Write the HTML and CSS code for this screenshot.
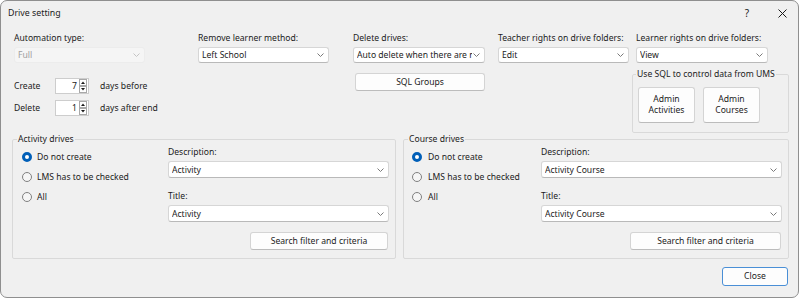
FILE: index.html
```html
<!DOCTYPE html>
<html lang="en">
<head>
<meta charset="utf-8">
<title>Drive setting</title>
<link rel="stylesheet" href="styles.css">
</head>
<body>
<div class="window">
  <div class="titlebar">
    <span class="title">Drive setting</span>
    <span class="tb-help">?</span>
    <svg class="tb-close" width="9" height="9" viewBox="0 0 9 9"><path d="M0.5 0.5L8.5 8.5M8.5 0.5L0.5 8.5" stroke="#1a1a1a" stroke-width="1"/></svg>
  </div>

  <div class="top-row">
    <div class="field">
      <div class="lbl">Automation type:</div>
      <div class="combo disabled w131"><span class="val">Full</span><svg class="chev" width="7" height="4" viewBox="0 0 7 4"><path d="M0.5 0.5L3.5 3.5L6.5 0.5" fill="none" stroke="#c4c4c4"/></svg></div>
    </div>
    <div class="field">
      <div class="lbl">Remove learner method:</div>
      <div class="combo w131"><span class="val">Left School</span><svg class="chev" width="7" height="4" viewBox="0 0 7 4"><path d="M0.5 0.5L3.5 3.5L6.5 0.5" fill="none" stroke="#7a7a7a"/></svg></div>
    </div>
    <div class="field">
      <div class="lbl">Delete drives:</div>
      <div class="combo w132"><span class="val tight">Auto delete when there are no members</span><svg class="chev" width="7" height="4" viewBox="0 0 7 4"><path d="M0.5 0.5L3.5 3.5L6.5 0.5" fill="none" stroke="#7a7a7a"/></svg></div>
    </div>
    <div class="field">
      <div class="lbl">Teacher rights on drive folders:</div>
      <div class="combo w131"><span class="val">Edit</span><svg class="chev" width="7" height="4" viewBox="0 0 7 4"><path d="M0.5 0.5L3.5 3.5L6.5 0.5" fill="none" stroke="#7a7a7a"/></svg></div>
    </div>
    <div class="field">
      <div class="lbl">Learner rights on drive folders:</div>
      <div class="combo w132"><span class="val">View</span><svg class="chev" width="7" height="4" viewBox="0 0 7 4"><path d="M0.5 0.5L3.5 3.5L6.5 0.5" fill="none" stroke="#7a7a7a"/></svg></div>
    </div>
  </div>

  <div class="mid-row">
    <div class="spin-block">
      <div class="spin-row">
        <span class="spin-label">Create</span>
        <div class="spinner"><span class="num">7</span><svg class="spin-btns" width="8" height="14" viewBox="0 0 8 14"><rect x="0.5" y="0.5" width="7" height="6" fill="#fff" stroke="#a8a8a8"/><rect x="0.5" y="7.5" width="7" height="6" fill="#fff" stroke="#a8a8a8"/><path d="M2 5L4 2.5L6 5Z" fill="#1a1a1a"/><path d="M2 9L4 11.5L6 9Z" fill="#1a1a1a"/></svg></div>
        <span class="spin-unit">days before</span>
      </div>
      <div class="spin-row">
        <span class="spin-label">Delete</span>
        <div class="spinner"><span class="num">1</span><svg class="spin-btns" width="8" height="14" viewBox="0 0 8 14"><rect x="0.5" y="0.5" width="7" height="6" fill="#fff" stroke="#a8a8a8"/><rect x="0.5" y="7.5" width="7" height="6" fill="#fff" stroke="#a8a8a8"/><path d="M2 5L4 2.5L6 5Z" fill="#1a1a1a"/><path d="M2 9L4 11.5L6 9Z" fill="#1a1a1a"/></svg></div>
        <span class="spin-unit">days after end</span>
      </div>
    </div>
    <div class="sql-block">
      <button class="btn sql-btn">SQL Groups</button>
    </div>
    <fieldset class="group ums">
      <legend>Use SQL to control data from UMS</legend>
      <div class="ums-btns">
        <button class="btn admin-btn">Admin<br>Activities</button>
        <button class="btn admin-btn">Admin<br>Courses</button>
      </div>
    </fieldset>
  </div>

  <div class="groups-row">
    <fieldset class="group drives activity">
      <legend>Activity drives</legend>
      <div class="group-body">
        <div class="radios">
          <div class="radio-row"><span class="radio on"></span><span>Do not create</span></div>
          <div class="radio-row"><span class="radio"></span><span>LMS has to be checked</span></div>
          <div class="radio-row"><span class="radio"></span><span>All</span></div>
        </div>
        <div class="fields">
          <div class="lbl">Description:</div>
          <div class="combo full"><span class="val">Activity</span><svg class="chev" width="7" height="4" viewBox="0 0 7 4"><path d="M0.5 0.5L3.5 3.5L6.5 0.5" fill="none" stroke="#7a7a7a"/></svg></div>
          <div class="lbl lbl-title">Title:</div>
          <div class="combo full"><span class="val">Activity</span><svg class="chev" width="7" height="4" viewBox="0 0 7 4"><path d="M0.5 0.5L3.5 3.5L6.5 0.5" fill="none" stroke="#7a7a7a"/></svg></div>
          <button class="btn search-btn">Search filter and criteria</button>
        </div>
      </div>
    </fieldset>
    <fieldset class="group drives course">
      <legend>Course drives</legend>
      <div class="group-body">
        <div class="radios">
          <div class="radio-row"><span class="radio on"></span><span>Do not create</span></div>
          <div class="radio-row"><span class="radio"></span><span>LMS has to be checked</span></div>
          <div class="radio-row"><span class="radio"></span><span>All</span></div>
        </div>
        <div class="fields">
          <div class="lbl">Description:</div>
          <div class="combo full"><span class="val">Activity Course</span><svg class="chev" width="7" height="4" viewBox="0 0 7 4"><path d="M0.5 0.5L3.5 3.5L6.5 0.5" fill="none" stroke="#7a7a7a"/></svg></div>
          <div class="lbl lbl-title">Title:</div>
          <div class="combo full"><span class="val">Activity Course</span><svg class="chev" width="7" height="4" viewBox="0 0 7 4"><path d="M0.5 0.5L3.5 3.5L6.5 0.5" fill="none" stroke="#7a7a7a"/></svg></div>
          <button class="btn search-btn">Search filter and criteria</button>
        </div>
      </div>
    </fieldset>
  </div>

  <div class="footer">
    <button class="btn close-btn">Close</button>
  </div>
</div>
</body>
</html>
```

FILE: styles.css
```css
* { box-sizing: border-box; }

body {
  margin: 0;
  background: #ffffff;
  font-family: "Noto Sans", "Open Sans", sans-serif;
  font-size: 8.6px;
  color: #1b1b1b;
}

.window {
  width: 799px;
  height: 298px;
  border: 1px solid #8f8f8f;
  border-radius: 7px;
  background: #f0f0f0;
  overflow: hidden;
}

/* title bar */
.titlebar {
  height: 24px;
  display: flex;
  align-items: center;
  padding-left: 7px;
}
.title { flex: 1; font-size: 8.8px; }
.tb-help { font-size: 10px; margin-right: 29px; color: #1a1a1a; }
.tb-close { margin-right: 11px; }

/* generic */
.lbl { line-height: 14px; height: 14px; white-space: nowrap; }

.combo {
  display: flex;
  align-items: center;
  height: 16px;
  margin-top: 2px;
  background: #ffffff;
  border: 1px solid #d6d6d6;
  border-bottom-color: #b9b9b9;
  border-radius: 3px;
  padding: 0 4px 0 3px;
}
.combo .val {
  flex: 1;
  overflow: hidden;
  white-space: nowrap;
  text-overflow: clip;
  min-width: 0;
  margin-right: 4px;
}
.combo .val.tight { margin-right: 1px; }
.combo .chev { flex: none; }
.combo.disabled {
  background: #f5f5f5;
  border-color: #ececec;
  color: #9e9e9e;
}
.w131 { width: 131px; }
.w132 { width: 132px; }
.combo.full { width: 100%; height: 17px; }

.btn {
  font: inherit;
  color: #1b1b1b;
  background: #fdfdfd;
  border: 1px solid #d4d4d4;
  border-bottom-color: #bcbcbc;
  border-radius: 3px;
  padding: 0;
  line-height: 11px;
}

/* top row */
.top-row {
  display: grid;
  grid-template-columns: 184px 155px 145px 138px 132px;
  padding: 6px 0 0 13px;
}

/* middle row */
.mid-row {
  display: flex;
  height: 70px;
  padding-left: 13px;
}
.spin-block {
  width: 341px;
  padding-top: 15px;
  display: flex;
  flex-direction: column;
  gap: 6px;
}
.spin-row { display: flex; align-items: center; height: 16px; }
.spin-label { width: 41px; }
.spinner {
  width: 34px;
  height: 16px;
  background: #fff;
  border: 1px solid #cdcdcd;
  display: flex;
  align-items: center;
  justify-content: flex-end;
  padding-right: 1px;
  margin-right: 11px;
}
.spinner .num { margin-right: 2px; }
.sql-block { width: 277px; padding-top: 10px; }
.sql-btn { width: 130px; height: 18px; }

/* group boxes */
.group {
  margin: 0;
  padding: 0;
  border: 1px solid #d9d9d9;
  border-radius: 2px;
  min-width: 0;
}
.group legend {
  margin-left: 3px;
  padding: 0 1px;
  line-height: 12px;
  height: 12px;
  white-space: nowrap;
}
.ums {
  width: 157px;
  height: 65px;
  margin-top: 5px;
}
.ums-btns {
  display: flex;
  gap: 8px;
  padding: 7px 0 0 5px;
}
.admin-btn { width: 57px; height: 36px; }

.groups-row {
  display: flex;
  gap: 7px;
  padding-left: 11px;
}
.drives { height: 126px; }
.activity { width: 384px; }
.course { width: 386px; }
.drives legend { margin-left: 4px; }

.group-body { display: grid; }
.activity .group-body { grid-template-columns: 155px 221px; }
.course .group-body { grid-template-columns: 137px 241px; }

.radios { padding: 2px 0 0 9px; }
.course .radios { padding-left: 8px; }
.radio-row { height: 20px; display: flex; align-items: center; gap: 5px; }
.course .radio-row { gap: 6px; }
.radio {
  width: 10px;
  height: 10px;
  border-radius: 50%;
  border: 1px solid #808080;
  background: #f6f6f6;
  flex: none;
}
.radio.on {
  border: 3px solid #005fb8;
  background: #ffffff;
}

.fields { display: flex; flex-direction: column; }
.lbl-title { margin-top: 11px; }
.search-btn {
  align-self: flex-end;
  margin-top: 10px;
  height: 18px;
  margin-right: 1px;
}
.activity .search-btn { width: 138px; }
.course .search-btn { width: 151px; }

/* footer */
.footer {
  display: flex;
  justify-content: flex-end;
  padding: 8px 10px 0 0;
}
.close-btn {
  width: 66px;
  height: 19px;
  border: 1px solid #4a8fd6;
  background: #fdfdfd;
}
```
